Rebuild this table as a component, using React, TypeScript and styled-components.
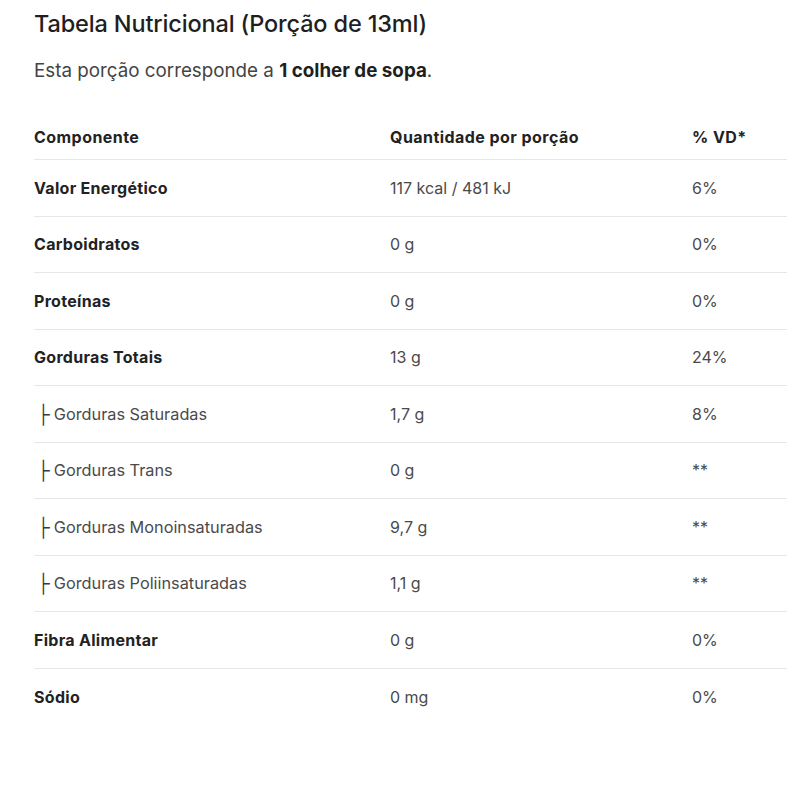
import React from "react";
import styled, { createGlobalStyle } from "styled-components";

const Global = createGlobalStyle`
  html, body { margin: 0; padding: 0; background: #ffffff; }
  body { font-family: Inter, "Noto Sans", "Liberation Sans", sans-serif; color: #1f1f1f; }
`;

const Page = styled.div`
  padding: 9px 13px 0 34px;
  width: 800px;
  box-sizing: border-box;
`;

const Title = styled.h1`
  margin: 0;
  font-size: 23.5px;
  line-height: 30px;
  font-weight: 500;
  color: #1f1f1f;
  letter-spacing: -0.15px;
`;

const Subtitle = styled.p`
  margin: 19px 0 0;
  font-size: 18.8px;
  line-height: 26px;
  color: #444;
  b { color: #1f1f1f; font-weight: 700; }
`;

const Table = styled.div`
  margin-top: 29px;
  display: grid;
  grid-template-columns: 356px 302px 1fr;
`;

const Cell = styled.div<{ $head?: boolean; $bold?: boolean; $sub?: boolean; $last?: boolean }>`
  height: ${(p) => (p.$head ? "47px" : "56.5px")};
  box-sizing: border-box;
  display: flex;
  align-items: ${(p) => (p.$head ? "flex-start" : "center")};
  padding-top: ${(p) => (p.$head ? "12px" : "0")};
  padding-left: ${(p) => (p.$sub ? "3px" : "0")};
  border-bottom: ${(p) => (p.$last ? "none" : "1px solid #e6e6e6")};
  font-size: ${(p) => (p.$sub ? "16.3px" : "16px")};
  line-height: 24px;
  font-weight: ${(p) => (p.$bold || p.$head ? 700 : 400)};
  letter-spacing: ${(p) => (p.$head ? "0.45px" : p.$bold ? "0.3px" : "0")};
  color: ${(p) => (p.$bold || p.$head ? "#222" : "#4a4a4a")};
  white-space: nowrap;
`;

const Branch = styled.span`
  font-size: 18px;
  margin-right: 4px;
  color: #3a3a3a;
`;

type Row = { name: string; qty: string; vd: string; sub?: boolean };

const rows: Row[] = [
  { name: "Valor Energético", qty: "117 kcal / 481 kJ", vd: "6%" },
  { name: "Carboidratos", qty: "0 g", vd: "0%" },
  { name: "Proteínas", qty: "0 g", vd: "0%" },
  { name: "Gorduras Totais", qty: "13 g", vd: "24%" },
  { name: "Gorduras Saturadas", qty: "1,7 g", vd: "8%", sub: true },
  { name: "Gorduras Trans", qty: "0 g", vd: "**", sub: true },
  { name: "Gorduras Monoinsaturadas", qty: "9,7 g", vd: "**", sub: true },
  { name: "Gorduras Poliinsaturadas", qty: "1,1 g", vd: "**", sub: true },
  { name: "Fibra Alimentar", qty: "0 g", vd: "0%" },
  { name: "Sódio", qty: "0 mg", vd: "0%" },
];

export default function App() {
  return (
    <>
      <Global />
      <Page>
        <Title>Tabela Nutricional (Porção de 13ml)</Title>
        <Subtitle>
          Esta porção corresponde a <b>1 colher de sopa</b>.
        </Subtitle>
        <Table>
          <Cell $head>Componente</Cell>
          <Cell $head>Quantidade por porção</Cell>
          <Cell $head>% VD*</Cell>
          {rows.map((r, i) => {
            const last = i === rows.length - 1;
            return (
              <React.Fragment key={r.name}>
                <Cell $bold={!r.sub} $sub={r.sub} $last={last}>
                  {r.sub && <Branch>├</Branch>}
                  {r.name}
                </Cell>
                <Cell $last={last}>{r.qty}</Cell>
                <Cell $last={last}>{r.vd}</Cell>
              </React.Fragment>
            );
          })}
        </Table>
      </Page>
    </>
  );
}
